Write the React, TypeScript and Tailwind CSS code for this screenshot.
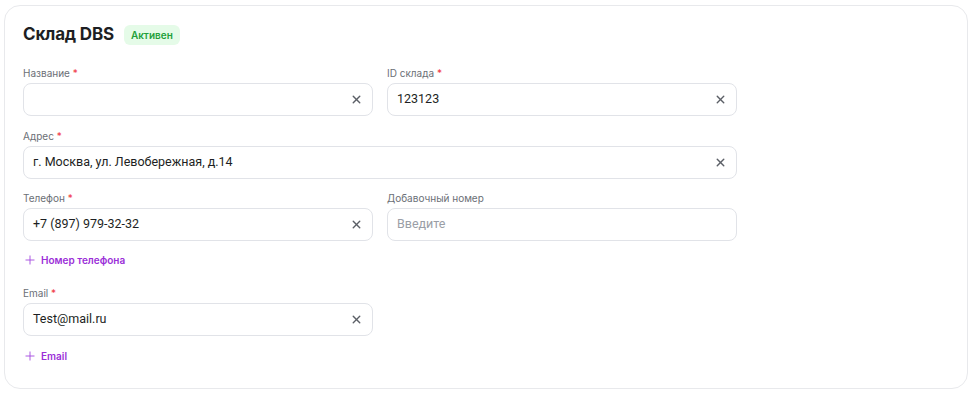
import { X, Plus } from "lucide-react";

type FieldProps = {
  label: string;
  required?: boolean;
  value?: string;
  placeholder?: string;
  clearable?: boolean;
  className?: string;
};

const Field = ({ label, required, value, placeholder, clearable = true, className = "" }: FieldProps) => {
  return (
    <div className={`flex flex-col ${className}`}>
      <div className="h-4 mb-[2px] text-[10px] leading-4 text-[#6b6f76]">
        {label}
        {required && <span className="text-[#f0353f]"> *</span>}
      </div>
      <div className="flex items-center h-[33px] rounded-lg border border-[#e1e3e8] bg-white pl-[9px] pr-[9px]">
        <div
          className={`flex-1 font-['Roboto',sans-serif] text-[12.5px] ${value ? "text-[#1d1f23]" : "text-[#9a9ea6]"}`}
        >
          {value || placeholder}
        </div>
        {clearable && <X size={13} strokeWidth={2.6} className="text-[#5b5f66]" />}
      </div>
    </div>
  );
};

const AddLink = ({ text }: { text: string }) => (
  <button className="flex items-center gap-[4px] h-4 text-[10px] font-semibold text-[#9b2fd8]">
    <Plus size={14} strokeWidth={1.6} className="text-[#a64de0]" />
    {text}
  </button>
);

export default function App() {
  return (
    <div className="w-[975px] h-[393px] bg-white pt-[5px] pl-[4px] font-['Inter',sans-serif]">
      <div className="w-[964px] h-[384px] rounded-2xl border border-[#e8e9ec] pl-[18px] pt-[19px]">
        <div className="flex items-center gap-[10px] h-5">
          <h1 className="text-[17px] font-bold text-[#1d1f23] tracking-[-0.2px]">Склад DBS</h1>
          <span className="h-5 px-[7px] rounded-md bg-[#e5fbe8] text-[10px] font-semibold leading-5 text-[#23a03a]">
            Активен
          </span>
        </div>

        <div className="w-[714px] mt-5 flex flex-col">
          <div className="grid grid-cols-2 gap-x-[14px]">
            <Field label="Название" required />
            <Field label="ID склада" required value="123123" />
          </div>
          <Field className="mt-3" label="Адрес" required value="г. Москва, ул. Левобережная, д.14" />
          <div className="grid grid-cols-2 gap-x-[14px] mt-[11px]">
            <Field label="Телефон" required value="+7 (897) 979-32-32" />
            <Field label="Добавочный номер" placeholder="Введите" clearable={false} />
          </div>
          <div className="mt-[11px]">
            <AddLink text="Номер телефона" />
          </div>
          <div className="grid grid-cols-2 gap-x-[14px] mt-[17px]">
            <Field label="Email" required value="Test@mail.ru" />
          </div>
          <div className="mt-3">
            <AddLink text="Email" />
          </div>
        </div>
      </div>
    </div>
  );
}
